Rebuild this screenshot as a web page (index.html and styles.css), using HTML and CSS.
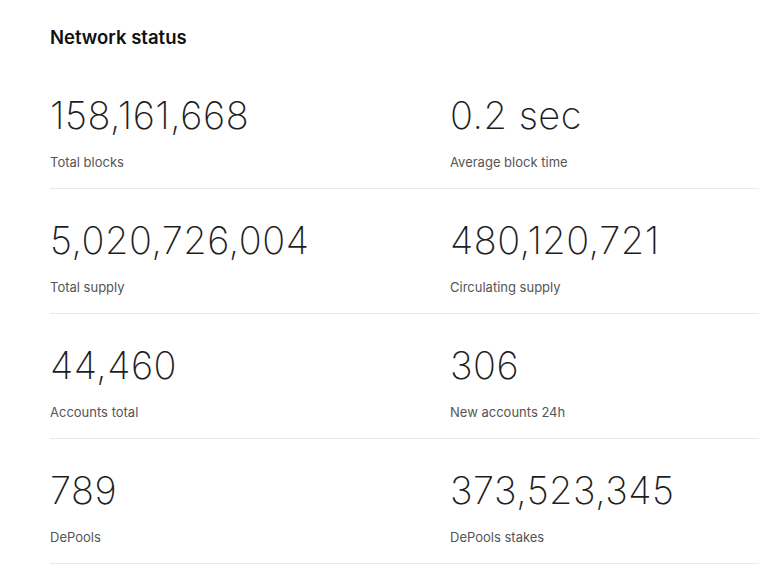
FILE: index.html
```html
<!DOCTYPE html>
<html>
<head>
<meta charset="utf-8">
<link rel="stylesheet" href="styles.css">
</head>
<body>
<section class="status">
  <h2 class="title">Network status</h2>
  <div class="grid">
    <div class="cell"><div class="value">158,161,668</div><div class="label">Total blocks</div></div>
    <div class="cell"><div class="value">0.2 sec</div><div class="label">Average block time</div></div>
    <div class="cell"><div class="value">5,020,726,004</div><div class="label">Total supply</div></div>
    <div class="cell"><div class="value">480,120,721</div><div class="label">Circulating supply</div></div>
    <div class="cell"><div class="value">44,460</div><div class="label">Accounts total</div></div>
    <div class="cell"><div class="value">306</div><div class="label">New accounts 24h</div></div>
    <div class="cell"><div class="value">789</div><div class="label">DePools</div></div>
    <div class="cell"><div class="value">373,523,345</div><div class="label">DePools stakes</div></div>
  </div>
</section>
</body>
</html>
```

FILE: styles.css
```css
html, body {
  margin: 0;
  padding: 0;
  background: #ffffff;
  font-family: "Inter", "Roboto", sans-serif;
  color: #1a1a1a;
}

.status {
  padding: 25px 0 0 50px;
  overflow: hidden;
}

.title {
  margin: 0;
  font-size: 18.5px;
  line-height: 24px;
  font-weight: 600;
  color: #111;
}

.grid {
  margin-top: 15px;
  display: grid;
  grid-template-columns: 400px 400px;
}

.cell {
  padding: 25px 0 16px 0;
  border-bottom: 1px solid #e8e8e8;
}

.value {
  font-size: 38px;
  line-height: 52px;
  font-weight: 200;
  letter-spacing: 0.5px;
  color: #1e1e1e;
}

.label {
  margin-top: 11px;
  font-size: 13px;
  line-height: 20px;
  color: #555;
}
```
